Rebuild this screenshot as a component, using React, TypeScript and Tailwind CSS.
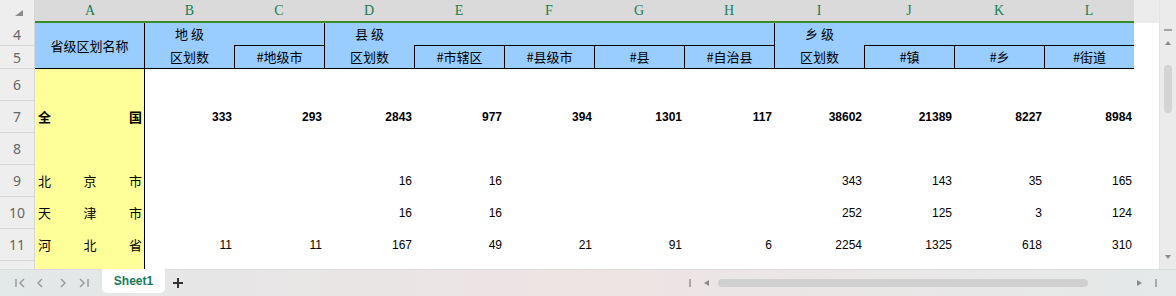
type Col = { key: string; w: string };

const cols: Col[] = [
  { key: "A", w: "w-[110px]" },
  { key: "B", w: "w-[89px]" },
  { key: "C", w: "w-[90px]" },
  { key: "D", w: "w-[90px]" },
  { key: "E", w: "w-[90px]" },
  { key: "F", w: "w-[90px]" },
  { key: "G", w: "w-[90px]" },
  { key: "H", w: "w-[90px]" },
  { key: "I", w: "w-[90px]" },
  { key: "J", w: "w-[90px]" },
  { key: "K", w: "w-[90px]" },
  { key: "L", w: "w-[90px]" },
];

const dataCols = cols.slice(1);

type Row = { n: number; name?: string[]; bold?: boolean; vals?: string[]; hideNum?: boolean };

const rows: Row[] = [
  { n: 6 },
  {
    n: 7,
    name: ["全", "国"],
    bold: true,
    vals: ["333", "293", "2843", "977", "394", "1301", "117", "38602", "21389", "8227", "8984"],
  },
  { n: 8 },
  { n: 9, name: ["北", "京", "市"], vals: ["", "", "16", "16", "", "", "", "343", "143", "35", "165"] },
  { n: 10, name: ["天", "津", "市"], vals: ["", "", "16", "16", "", "", "", "252", "125", "3", "124"] },
  {
    n: 11,
    name: ["河", "北", "省"],
    vals: ["11", "11", "167", "49", "21", "91", "6", "2254", "1325", "618", "310"],
  },
  // row 12 is only a sliver above the tab bar, its number sits below the fold
  { n: 12, hideNum: true },
];

const cjk = "font-['Noto_Sans_CJK_SC',sans-serif]";

// row 4 / row 5 header cells for columns B..L
const top4 = [
  { text: "地 级", cls: "" },
  { text: "", cls: "" },
  { text: "县 级", cls: "border-l border-black" },
  { text: "", cls: "" },
  { text: "", cls: "" },
  { text: "", cls: "" },
  { text: "", cls: "" },
  { text: "乡 级", cls: "border-l border-black" },
  { text: "", cls: "" },
  { text: "", cls: "" },
  { text: "", cls: "" },
];

const sub5 = [
  { text: "区划数", cls: "" },
  { text: "#地级市", cls: "border-l border-t border-black" },
  { text: "区划数", cls: "border-l border-black" },
  { text: "#市辖区", cls: "border-l border-t border-black" },
  { text: "#县级市", cls: "border-l border-t border-black" },
  { text: "#县", cls: "border-l border-t border-black" },
  { text: "#自治县", cls: "border-l border-t border-black" },
  { text: "区划数", cls: "border-l border-black" },
  { text: "#镇", cls: "border-l border-t border-black" },
  { text: "#乡", cls: "border-l border-t border-black" },
  { text: "#街道", cls: "border-l border-t border-black" },
];

const RowHead = (props: { n?: number; h: string }) => (
  <div
    className={`${props.h} w-[35px] shrink-0 bg-[#eeeeee] border-r border-b border-[#d6d6d6] flex items-center justify-center text-[14px] text-[#666666] font-['Noto_Sans',sans-serif]`}
  >
    {props.n}
  </div>
);

const Chevron = (props: { dir: "l" | "r"; bar?: boolean }) => (
  <svg width={props.bar ? 10 : 6} height="10" viewBox={props.bar ? "0 0 10 10" : "0 0 6 10"} className="shrink-0">
    {props.dir === "l" ? (
      <>
        {props.bar && <line x1="1" y1="1" x2="1" y2="9" stroke="#9b9b9b" strokeWidth="1.5" />}
        <polyline
          points={props.bar ? "9,1 5,5 9,9" : "5,1 1,5 5,9"}
          fill="none"
          stroke="#9b9b9b"
          strokeWidth="1.5"
        />
      </>
    ) : (
      <>
        <polyline points="1,1 5,5 1,9" fill="none" stroke="#9b9b9b" strokeWidth="1.5" />
        {props.bar && <line x1="9" y1="1" x2="9" y2="9" stroke="#9b9b9b" strokeWidth="1.5" />}
      </>
    )}
  </svg>
);

const App = () => {
  return (
    <div className="w-[1176px] h-[296px] overflow-hidden flex flex-col bg-white">
      <div className="flex h-[269px]">
        {/* sheet */}
        <div className="w-[1159px] flex flex-col">
          {/* column letters */}
          <div className="flex h-[23px] shrink-0 bg-[#ececec]">
            <div className="w-[35px] h-[23px] bg-[#eeeeee] border-r border-[#d6d6d6] flex items-start justify-start">
              <svg width="8" height="6" viewBox="0 0 8 6" className="mt-[10px] ml-[15px]">
                <polygon points="8,0 8,6 0,6" fill="#8c8c8c" />
              </svg>
            </div>
            <div className="flex bg-[#dadada] border-b-2 border-[#3c8a28]">
              {cols.map((c) => (
                <div
                  key={c.key}
                  className={`${c.w} h-[21px] flex items-center justify-center text-[14px] text-[#188050] font-['Liberation_Serif',serif]`}
                >
                  {c.key}
                </div>
              ))}
            </div>
          </div>

          {/* rows 4 and 5 */}
          <div className="flex h-[46px] shrink-0">
            <div className="flex flex-col">
              <RowHead n={4} h="h-[23px]" />
              <RowHead n={5} h="h-[23px]" />
            </div>
            <div className={`flex bg-[#99ccff] border-b border-black text-[13px] text-black ${cjk}`}>
              <div className="w-[110px] h-[45px] border-r border-black flex items-center justify-center">
                省级区划名称
              </div>
              <div className="flex flex-col">
                <div className="flex h-[22px]">
                  {top4.map((c, i) => (
                    <div
                      key={i}
                      className={`${dataCols[i].w} h-[22px] flex items-center justify-center ${c.cls}`}
                    >
                      {c.text}
                    </div>
                  ))}
                </div>
                <div className="flex h-[23px]">
                  {sub5.map((c, i) => (
                    <div
                      key={i}
                      className={`${dataCols[i].w} h-[23px] flex items-center justify-center ${c.cls}`}
                    >
                      {c.text}
                    </div>
                  ))}
                </div>
              </div>
            </div>
          </div>

          {/* data rows */}
          <div className="h-[200px] overflow-hidden flex flex-col">
            {rows.map((r) => (
              <div key={r.n} className="flex h-[32px] shrink-0">
                <RowHead n={r.hideNum ? undefined : r.n} h="h-[32px]" />
                <div
                  className={`w-[110px] h-[32px] shrink-0 bg-[#ffff99] border-r border-black flex items-center justify-between pl-[3px] pr-[2px] text-[13px] text-black ${cjk} ${r.bold ? "font-bold" : ""}`}
                >
                  {(r.name ?? []).map((ch, i) => (
                    <span key={i}>{ch}</span>
                  ))}
                </div>
                {dataCols.map((c, i) => (
                  <div
                    key={c.key}
                    className={`${c.w} h-[32px] shrink-0 flex items-center justify-end pr-[2px] text-[12px] text-black font-['Liberation_Sans',Arial,sans-serif] ${r.bold ? "font-bold" : ""}`}
                  >
                    {r.vals ? r.vals[i] : ""}
                  </div>
                ))}
              </div>
            ))}
          </div>
        </div>

        {/* vertical scrollbar */}
        <div className="w-[17px] h-[269px] bg-[#ebebeb] border-l border-[#e2e2e2] flex flex-col items-center">
          <div className="w-[8px] h-[2px] mt-[29px] bg-[#a5a5a5]" />
          <svg width="6" height="4" viewBox="0 0 6 4" className="mt-[10px]">
            <polygon points="3,0 6,4 0,4" fill="#8a8a8a" />
          </svg>
          <div className="w-[8px] h-[48px] mt-[20px] rounded-full bg-[#d4d4d4]" />
          <div className="flex-1" />
          <svg width="6" height="4" viewBox="0 0 6 4" className="mb-[10px]">
            <polygon points="0,0 6,0 3,4" fill="#8a8a8a" />
          </svg>
        </div>
      </div>

      {/* sheet tabs + horizontal scrollbar */}
      <div className="h-[27px] flex items-center border-t border-[#dcdcdc] bg-linear-to-r from-[#e3e8e8] via-[#eee4e4] to-[#e5e9e9]">
        <div className="ml-[15px]">
          <Chevron dir="l" bar />
        </div>
        <div className="ml-[12px]">
          <Chevron dir="l" />
        </div>
        <div className="ml-[17px]">
          <Chevron dir="r" />
        </div>
        <div className="ml-[13px]">
          <Chevron dir="r" bar />
        </div>
        <div className="ml-[13px] self-start -mt-px w-[63px] h-[24px] bg-white rounded-b-[5px] flex items-center justify-center text-[12px] font-bold text-[#147a5a] font-['Liberation_Sans',Arial,sans-serif]">
          Sheet1
        </div>
        <svg width="10" height="10" viewBox="0 0 10 10" className="ml-[8px] shrink-0">
          <line x1="5" y1="0" x2="5" y2="10" stroke="#333333" strokeWidth="2" />
          <line x1="0" y1="5" x2="10" y2="5" stroke="#333333" strokeWidth="2" />
        </svg>
        <div className="ml-[506px] w-[2px] h-[8px] bg-[#aaaaaa]" />
        <svg width="5" height="6" viewBox="0 0 5 6" className="ml-[13px] shrink-0">
          <polygon points="5,0 5,6 0,3" fill="#8a8a8a" />
        </svg>
        <div className="ml-[9px] w-[370px] h-[8px] rounded-full bg-[#d0d0d0]" />
        <svg width="5" height="6" viewBox="0 0 5 6" className="ml-[49px] shrink-0">
          <polygon points="0,0 5,3 0,6" fill="#8a8a8a" />
        </svg>
        <div className="ml-[13px] w-[2px] h-[8px] bg-[#aaaaaa]" />
      </div>
    </div>
  );
};

export default App;
